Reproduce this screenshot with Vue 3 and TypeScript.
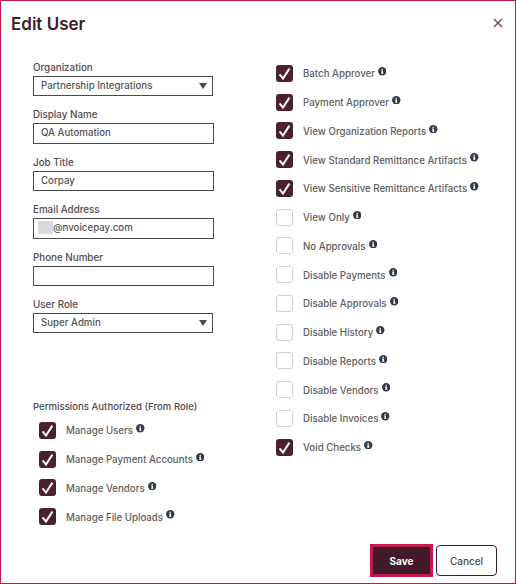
<script setup lang="ts">
interface Perm { label: string; checked: boolean }
const rolePerms: Perm[] = ['Manage Users', 'Manage Payment Accounts', 'Manage Vendors', 'Manage File Uploads'].map((label) => ({ label, checked: true }))
const checkedRight = ['Batch Approver', 'Payment Approver', 'View Organization Reports', 'View Standard Remittance Artifacts', 'View Sensitive Remittance Artifacts']
const uncheckedRight = ['View Only', 'No Approvals', 'Disable Payments', 'Disable Approvals', 'Disable History', 'Disable Reports', 'Disable Vendors', 'Disable Invoices']
const userPerms: Perm[] = [
  ...checkedRight.map((label) => ({ label, checked: true })),
  ...uncheckedRight.map((label) => ({ label, checked: false })),
  { label: 'Void Checks', checked: true },
]
</script>

<template>
  <div class="modal">
    <header class="head">
      <h1>Edit User</h1>
      <svg class="close" viewBox="0 0 10 10" width="10" height="10"><path d="M1 1L9 9M9 1L1 9" stroke="#6b4653" stroke-width="1.4" fill="none" /></svg>
    </header>
    <div class="body">
      <div class="col-left">
        <div class="fields">
          <label class="field"><span class="lab">Organization</span>
            <div class="box sel"><span>Partnership Integrations</span><i class="caret" /></div></label>
          <label class="field"><span class="lab">Display Name</span><div class="box">QA Automation</div></label>
          <label class="field"><span class="lab">Job Title</span><div class="box">Corpay</div></label>
          <label class="field"><span class="lab">Email Address</span>
            <div class="box email"><span class="redact" />@nvoicepay.com</div></label>
          <label class="field"><span class="lab">Phone Number</span><div class="box" /></label>
          <label class="field"><span class="lab">User Role</span>
            <div class="box sel"><span>Super Admin</span><i class="caret" /></div></label>
        </div>
        <div class="role">
          <div class="lab">Permissions Authorized (From Role)</div>
          <ul class="perms">
            <li v-for="p in rolePerms" :key="p.label" class="perm">
              <span class="cb on"><svg viewBox="0 0 17 17" width="17" height="17"><path d="M3.6 9.3L7 13.6L13.4 3.6" stroke="#fff" stroke-width="2" fill="none" /></svg></span>
              <span class="txt">{{ p.label }}</span>
              <svg class="info" viewBox="0 0 9 9" width="8.5" height="8.5"><circle cx="4.5" cy="4.5" r="4.4" fill="#33394a" /><path d="M3.7 1.8h1.6v1.2H3.7zM3.3 3.7h2v2.5h.4v1H3.3v-1h.5V4.7h-.5z" fill="#fff" /></svg>
            </li>
          </ul>
        </div>
      </div>
      <ul class="perms col-right">
        <li v-for="p in userPerms" :key="p.label" class="perm">
          <span class="cb" :class="{ on: p.checked }"><svg v-if="p.checked" viewBox="0 0 17 17" width="17" height="17"><path d="M3.6 9.3L7 13.6L13.4 3.6" stroke="#fff" stroke-width="2" fill="none" /></svg></span>
          <span class="txt">{{ p.label }}</span>
          <svg class="info" viewBox="0 0 9 9" width="8.5" height="8.5"><circle cx="4.5" cy="4.5" r="4.4" fill="#33394a" /><path d="M3.7 1.8h1.6v1.2H3.7zM3.3 3.7h2v2.5h.4v1H3.3v-1h.5V4.7h-.5z" fill="#fff" /></svg>
        </li>
      </ul>
    </div>
    <footer class="foot">
      <button class="btn save">Save</button>
      <button class="btn cancel">Cancel</button>
    </footer>
  </div>
</template>

<style scoped>
.modal {
  box-sizing: border-box;
  width: 516px;
  height: 584px;
  border: 1px solid #c2184b;
  background: #fff;
  display: flex;
  flex-direction: column;
  font-family: Inter, "Noto Sans", sans-serif;
  color: #4a4a4a;
}
.head {
  display: flex;
  justify-content: space-between;
  align-items: center;
  padding: 12px 12px 0 10px;
  height: 22px;
}
h1 {
  margin: 0;
  font-size: 17px;
  font-weight: 600;
  color: #3d2029;
  line-height: 22px;
}
.close { margin-top: -2px; }
.body {
  display: grid;
  grid-template-columns: 243px 1fr;
  padding-left: 32px;
  flex: 1;
}
.col-left { display: flex; flex-direction: column; padding-top: 26px; }
.fields { display: flex; flex-direction: column; gap: 12px; width: 181px; }
.field { display: block; }
.lab { display: block; font-size: 9.8px; font-weight: 500; line-height: 13px; margin-bottom: 2px; color: #55494d; }
.box {
  box-sizing: border-box;
  height: 20.5px;
  border: 1px solid #4a4a4a;
  font-size: 9.7px;
  line-height: 18px;
  padding-left: 7px;
  color: #555;
  font-weight: 500;
  display: flex;
  align-items: center;
}
.sel { width: 180px; height: 20px; justify-content: space-between; padding-right: 5px; }
.caret { width: 0; height: 0; border-left: 4px solid transparent; border-right: 4px solid transparent; border-top: 6px solid #4a4a4a; }
.redact { width: 15px; height: 13px; background: #d9d9d9; margin-left: -3px; margin-top: -2px; }
.role { margin-top: 67px; }
.role .lab { font-size: 9.6px; }
.role .perms { padding-left: 6px; margin-top: 3px; }
.perms { list-style: none; margin: 0; padding: 0; display: flex; flex-direction: column; }
.col-right { padding-top: 24px; }
.perm { height: 28.75px; display: flex; align-items: center; }
.cb {
  box-sizing: border-box;
  width: 17px;
  height: 17px;
  border-radius: 3px;
  border: 1px solid #d0d0d0;
  background: #fff;
  display: block;
  flex: none;
  margin-right: 10px;
}
.cb.on { border: 0; background: #4b2030; }
.cb svg { display: block; }
.txt { font-size: 9.7px; font-weight: 500; color: #606060; margin-top: 1px; }
.info { margin-left: 3px; margin-top: -4px; flex: none; }
.foot {
  display: flex;
  justify-content: flex-end;
  align-items: center;
  gap: 3px;
  padding: 0 18px 6px 0;
}
.btn { font-family: inherit; font-size: 10px; cursor: pointer; box-sizing: border-box; }
.save {
  width: 63px;
  height: 33px;
  background: #42182b;
  border: 3px solid #c2184b;
  color: #fff;
  font-weight: 700;
}
.cancel {
  width: 61px;
  height: 31px;
  background: #fff;
  border: 1px solid #42182b;
  border-radius: 4px;
  color: #4a4a4a;
  font-weight: 500;
}
</style>
